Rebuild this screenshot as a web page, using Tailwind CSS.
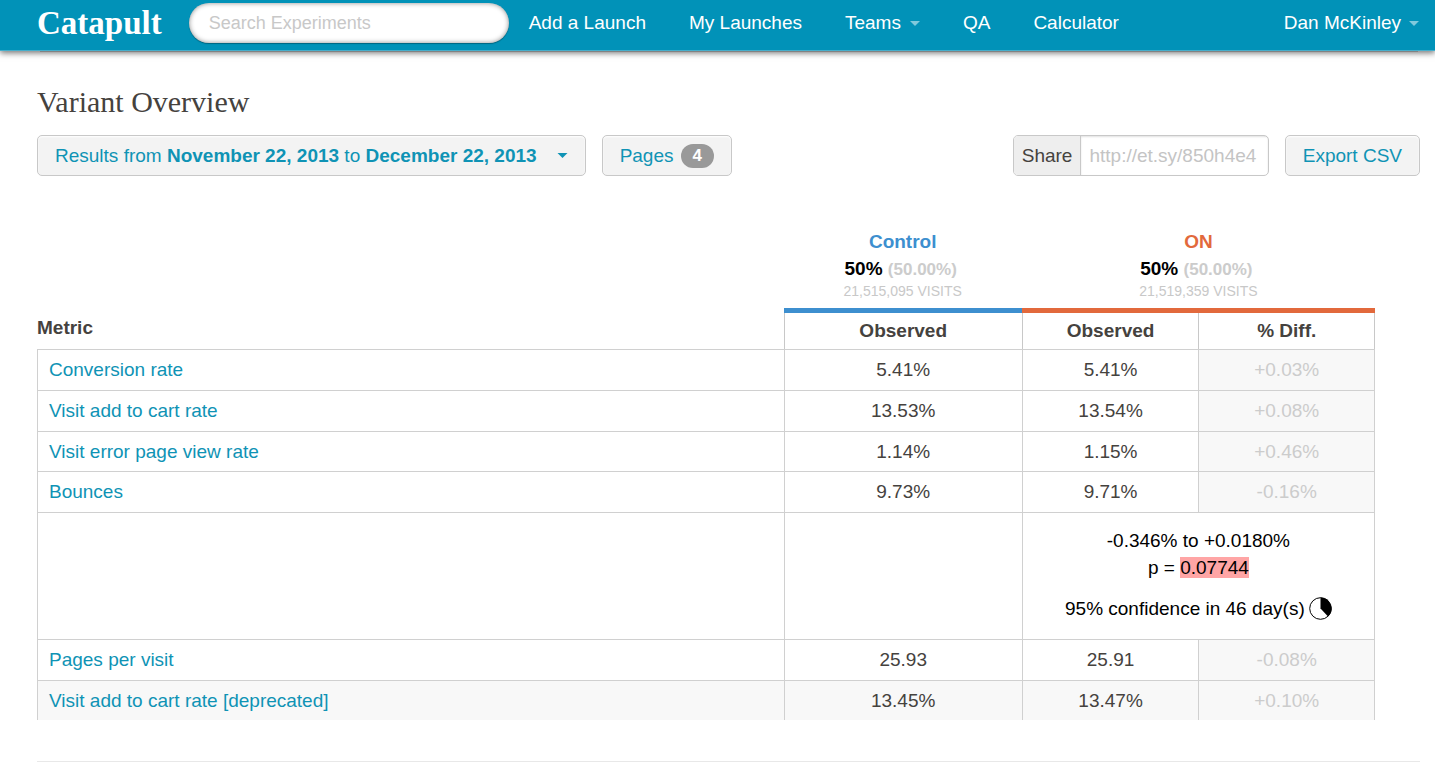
<!DOCTYPE html>
<html lang="en">
<head>
<meta charset="utf-8">
<title>Catapult</title>
<script src="https://cdn.jsdelivr.net/npm/@tailwindcss/browser@4"></script>
</head>
<body class="bg-white font-['Liberation_Sans',Arial,sans-serif] text-[19px] leading-7 text-[#45423e]">
<header class="relative z-10 flex items-center border-b border-[#45aecb] bg-[#0192b8] pt-[3px] pr-4 pb-[7px] pl-[37px] text-white shadow-[0_2px_6px_rgba(0,0,0,0.55)]">
  <a href="#" class="font-['Liberation_Serif',serif] text-[33px] leading-10 font-bold">Catapult</a>
  <input type="search" aria-label="Search Experiments" placeholder="Search Experiments" class="ml-[27px] h-10 w-80 rounded-full bg-white px-5 text-[18px] text-gray-700 shadow-[inset_0_0_5px_rgba(0,0,0,0.45),0_1px_1px_rgba(0,0,0,0.3)] placeholder:text-[#c8c8c8]">
  <nav class="ml-5 flex flex-1 items-center gap-[43px] whitespace-nowrap">
    <a href="#">Add a Launch</a>
    <a href="#">My Launches</a>
    <button type="button" class="flex items-center gap-[9px]">Teams
      <svg class="h-[5px] w-[10px] fill-white/50" viewBox="0 0 10 5"><path d="M0 0h10L5 5z"/></svg>
    </button>
    <a href="#">QA</a>
    <a href="#">Calculator</a>
    <button type="button" class="ml-auto flex items-center gap-2">Dan McKinley
      <svg class="h-[5px] w-[10px] fill-white/50" viewBox="0 0 10 5"><path d="M0 0h10L5 5z"/></svg>
    </button>
  </nav>
</header>
<hr class="mr-[17px] ml-10 border-[#cfcfcf]">
<main class="pr-[15px] pl-[37px]">
  <h1 class="pt-8 font-['Liberation_Serif',serif] text-[30px] leading-[35px]">Variant Overview</h1>
  <div class="mt-4 flex gap-4 whitespace-nowrap">
    <button type="button" class="flex h-[41px] items-center rounded-[5px] border border-[#c8c8c8] bg-[#f3f3f3] px-[17px] text-[#0f93b5] shadow-[inset_0_1px_2px_#fff]">
      <span>Results from <b>November 22, 2013</b> to <b>December 22, 2013</b></span>
      <svg class="ml-5 h-[5px] w-[11px] fill-[#0f93b5]" viewBox="0 0 10 5"><path d="M0 0h10L5 5z"/></svg>
    </button>
    <button type="button" class="flex h-[41px] items-center gap-[7px] rounded-[5px] border border-[#c8c8c8] bg-[#f3f3f3] px-[17px] text-[#0f93b5] shadow-[inset_0_1px_2px_#fff]">Pages
      <span class="rounded-full bg-[#999] px-3 text-[17px] leading-6 font-bold text-white">4</span>
    </button>
    <div class="ml-auto flex h-[41px] w-64 overflow-hidden rounded-[5px] border border-[#c8c8c8]">
      <label for="share" class="flex items-center border-r border-[#c8c8c8] bg-[#eee] px-2">Share</label>
      <div class="min-w-0 flex-1 px-2 shadow-[inset_0_1px_2px_rgba(0,0,0,0.12)]"><input id="share" type="text" readonly value="http://et.sy/850h4e4" class="h-full w-full bg-transparent text-[#c4c4c4]"></div>
    </div>
    <button type="button" class="h-[41px] rounded-[5px] border border-[#c8c8c8] bg-[#f3f3f3] px-[17px] text-[#0f93b5] shadow-[inset_0_1px_2px_#fff]">Export CSV</button>
  </div>
  <div class="mt-[52px] pr-[45px]">
    <table class="w-full table-fixed border-separate border-spacing-0 text-center">
      <colgroup><col class="w-[55.8%]"><col class="w-[17.8%]"><col class="w-[13.2%]"><col class="w-[13.2%]"></colgroup>
      <thead>
        <tr>
          <td></td>
          <th scope="col" class="border-b-[5px] border-[#3d8fcf] pb-[9px] font-bold text-[#3d8fcf]">Control
            <div class="pr-1 leading-[26px] text-black">50% <span class="text-[17px] text-[#ccc]">(50.00%)</span></div>
            <div class="text-[14px] leading-4 font-normal text-[#c8c8c8]">21,515,095 VISITS</div>
          </th>
          <th scope="colgroup" colspan="2" class="border-b-[5px] border-[#e2693c] pb-[9px] font-bold text-[#e2693c]">ON
            <div class="pr-1 leading-[26px] text-black">50% <span class="text-[17px] text-[#ccc]">(50.00%)</span></div>
            <div class="text-[14px] leading-4 font-normal text-[#c8c8c8]">21,519,359 VISITS</div>
          </th>
        </tr>
        <tr class="h-9">
          <th scope="col" class="pb-[6px] text-left">Metric</th>
          <th scope="col" class="border-l border-[#c8c8c8]">Observed</th>
          <th scope="col" class="border-l border-[#c8c8c8]">Observed</th>
          <th scope="col" class="border-x border-[#c8c8c8]">% Diff.</th>
        </tr>
      </thead>
      <tbody>
        <tr class="h-[41px]">
          <td class="border-t border-l border-[#d0d0d0] pl-[11px] text-left"><a href="#" class="text-[#0f93b5]">Conversion rate</a></td>
          <td class="border-t border-l border-[#d0d0d0]">5.41%</td>
          <td class="border-t border-l border-[#d0d0d0]">5.41%</td>
          <td class="border-x border-t border-[#d0d0d0] bg-[#f8f8f8] text-[#ccc]">+0.03%</td>
        </tr>
        <tr class="h-[41px]">
          <td class="border-t border-l border-[#d0d0d0] pl-[11px] text-left"><a href="#" class="text-[#0f93b5]">Visit add to cart rate</a></td>
          <td class="border-t border-l border-[#d0d0d0]">13.53%</td>
          <td class="border-t border-l border-[#d0d0d0]">13.54%</td>
          <td class="border-x border-t border-[#d0d0d0] bg-[#f8f8f8] text-[#ccc]">+0.08%</td>
        </tr>
        <tr class="h-10">
          <td class="border-t border-l border-[#d0d0d0] pl-[11px] text-left"><a href="#" class="text-[#0f93b5]">Visit error page view rate</a></td>
          <td class="border-t border-l border-[#d0d0d0]">1.14%</td>
          <td class="border-t border-l border-[#d0d0d0]">1.15%</td>
          <td class="border-x border-t border-[#d0d0d0] bg-[#f8f8f8] text-[#ccc]">+0.46%</td>
        </tr>
        <tr class="h-[41px]">
          <td class="border-t border-l border-[#d0d0d0] pl-[11px] text-left"><a href="#" class="text-[#0f93b5]">Bounces</a></td>
          <td class="border-t border-l border-[#d0d0d0]">9.73%</td>
          <td class="border-t border-l border-[#d0d0d0]">9.71%</td>
          <td class="border-x border-t border-[#d0d0d0] bg-[#f8f8f8] text-[#ccc]">-0.16%</td>
        </tr>
        <tr>
          <td class="border-t border-l border-[#d0d0d0]"></td>
          <td class="border-t border-l border-[#d0d0d0]"></td>
          <td colspan="2" class="border-x border-t border-[#d0d0d0] pt-[14px] pb-[17px] leading-[27px] text-black">
            <p>-0.346% to +0.0180%</p>
            <p>p = <span class="bg-[#ffa5a5]">0.07744</span></p>
            <p class="mt-[14px] flex items-center justify-center gap-1">95% confidence in 46 day(s)
              <svg class="size-[23px]" viewBox="0 0 23 23" aria-hidden="true"><circle cx="11.5" cy="11.5" r="10.8" fill="#fff" stroke="#000"/><path d="M11.5 11.5V.5a11 11 0 0 1 7.5 19z"/></svg>
            </p>
          </td>
        </tr>
        <tr class="h-[41px]">
          <td class="border-t border-l border-[#d0d0d0] pl-[11px] text-left"><a href="#" class="text-[#0f93b5]">Pages per visit</a></td>
          <td class="border-t border-l border-[#d0d0d0]">25.93</td>
          <td class="border-t border-l border-[#d0d0d0]">25.91</td>
          <td class="border-x border-t border-[#d0d0d0] bg-[#f8f8f8] text-[#ccc]">-0.08%</td>
        </tr>
        <tr class="h-10 bg-[#f8f8f8]">
          <td class="border-t border-l border-[#d0d0d0] pl-[11px] text-left"><a href="#" class="text-[#0f93b5]">Visit add to cart rate [deprecated]</a></td>
          <td class="border-t border-l border-[#d0d0d0]">13.45%</td>
          <td class="border-t border-l border-[#d0d0d0]">13.47%</td>
          <td class="border-x border-t border-[#d0d0d0] text-[#ccc]">+0.10%</td>
        </tr>
      </tbody>
    </table>
  </div>
  <hr class="mt-[41px] border-[#e8e8e8]">
</main>
</body>
</html>
